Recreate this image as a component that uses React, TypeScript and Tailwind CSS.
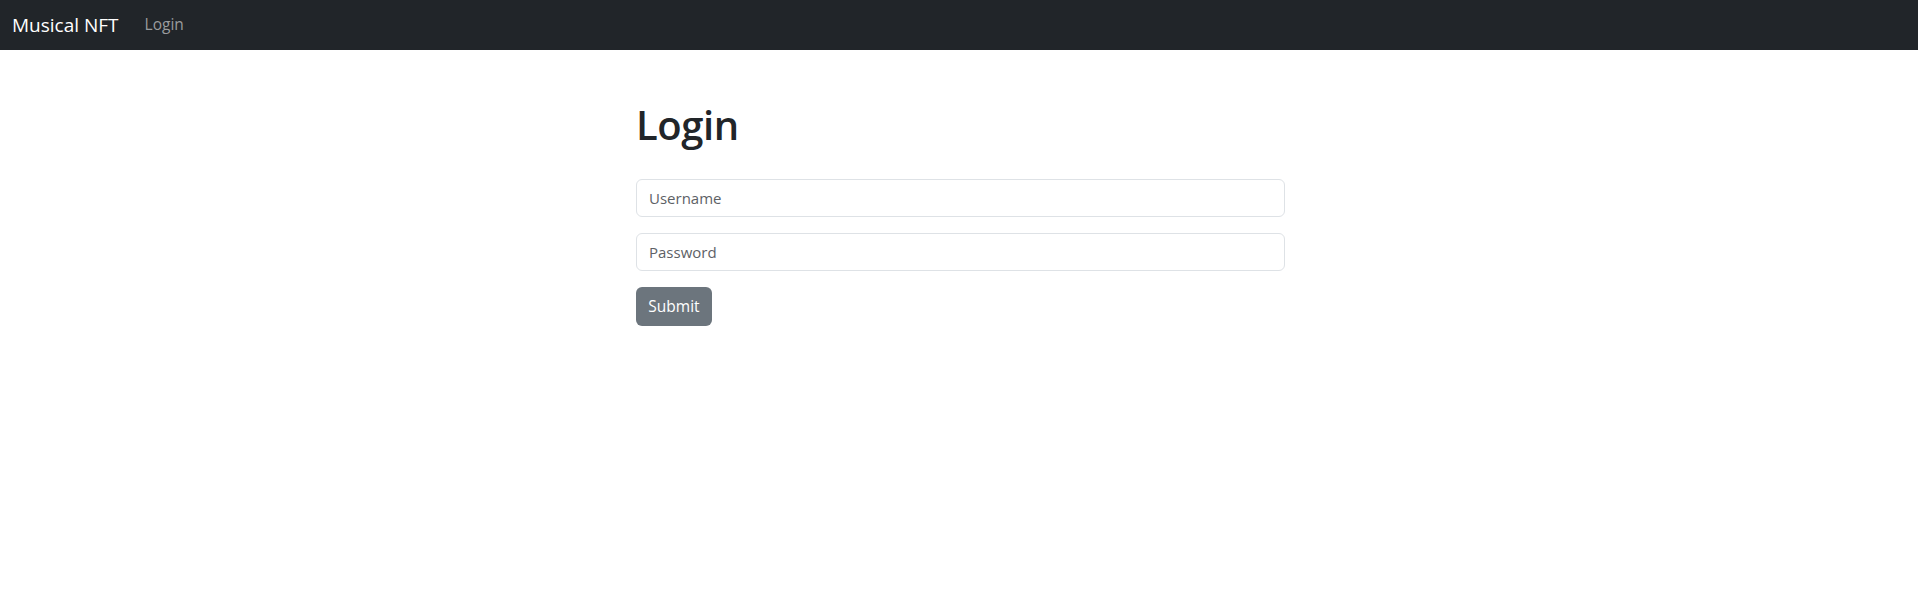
export default function App() {
  return (
    <div className="min-h-[594px] bg-white font-['Open_Sans',sans-serif] text-[#212529]">
      <nav className="flex h-[50px] items-center bg-[#212529] px-3">
        <a href="#" className="mr-[18px] text-[19px] text-white">
          Musical NFT
        </a>
        <a href="#" className="px-2 text-[15.5px] text-[#9a9c9e]">
          Login
        </a>
      </nav>

      <div className="mx-auto w-[652px] pl-[3px] pt-[51px]">
        <h1 className="mb-[30px] text-[40px] font-semibold leading-[48px] tracking-[-0.01em]">Login</h1>
        <form className="flex flex-col" onSubmit={(e) => e.preventDefault()}>
          <input
            type="text"
            placeholder="Username"
            className="mb-4 h-[38px] w-full rounded-[6px] border border-[#dee2e6] px-3 text-[15px] placeholder:text-[#5d6166] focus:outline-none"
          />
          <input
            type="password"
            placeholder="Password"
            className="mb-4 h-[38px] w-full rounded-[6px] border border-[#dee2e6] px-3 text-[15px] placeholder:text-[#5d6166] focus:outline-none"
          />
          <div>
            <button
              type="submit"
              className="h-[39px] w-[76px] rounded-[6px] bg-[#6c757d] text-[15.5px] text-white"
            >
              Submit
            </button>
          </div>
        </form>
      </div>
    </div>
  );
}
